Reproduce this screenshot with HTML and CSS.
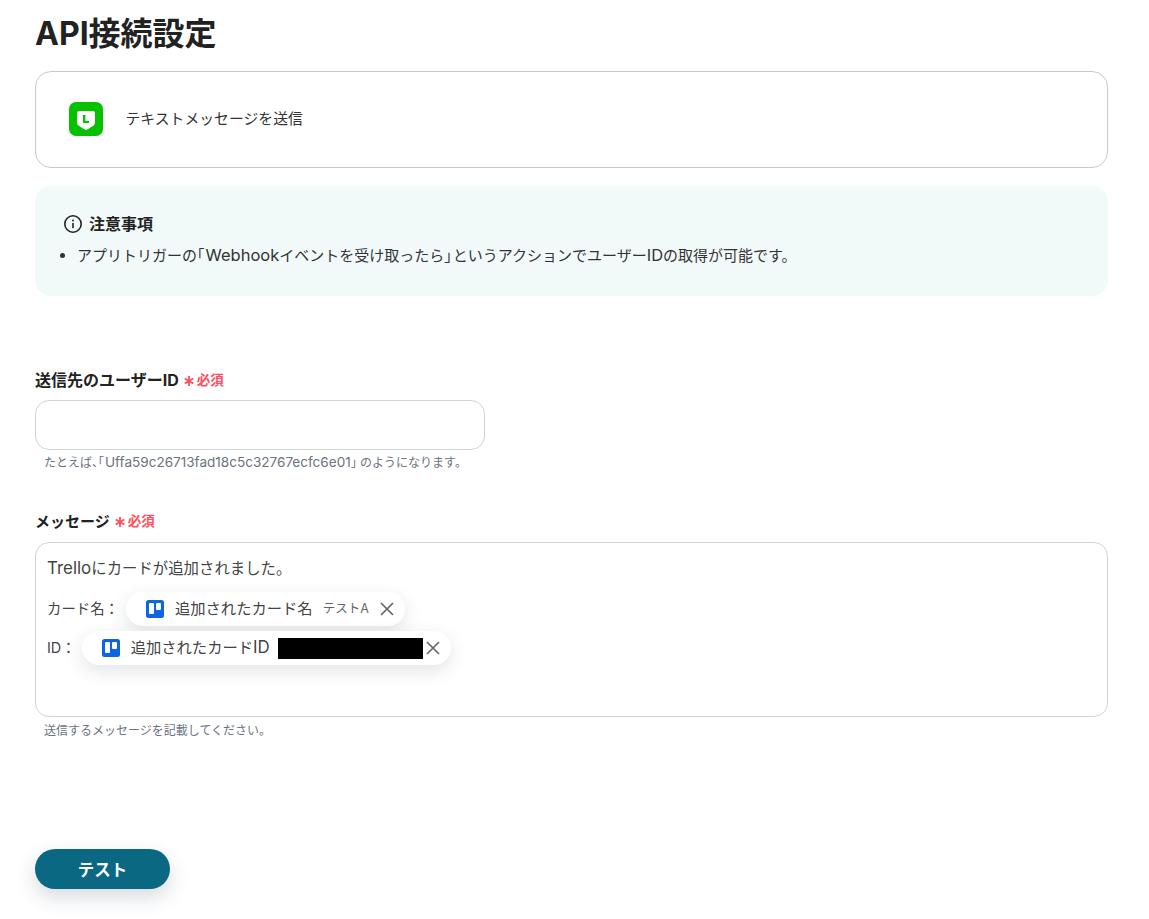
FILE: index.html
```html
<!DOCTYPE html>
<html lang="ja">
<head>
<meta charset="utf-8">
<title>API接続設定</title>
<link rel="stylesheet" href="styles.css">
</head>
<body>
<main class="page">
  <h1 class="title">API接続設定</h1>
  <section class="app-card">
    <svg class="app-icon" viewBox="0 0 34 34" width="34" height="34" aria-hidden="true">
      <rect width="34" height="34" rx="7" fill="#06c100"/>
      <path d="M8 11q0-2 2-2h14q2 0 2 2v9q0 3-3 4.500q-3 2-6 3.500q-3-1.500-6-3.500q-3-1.500-3-4.500z" fill="#fff"/>
      <path d="M14 13h2.400v6h3.600v2h-6z" fill="#06c100"/>
    </svg>
    <span class="app-text">テキストメッセージを送信</span>
  </section>
  <section class="notice">
    <div class="notice-head">
      <svg viewBox="0 0 20 20" width="20" height="20" aria-hidden="true">
        <circle cx="10" cy="10" r="8.200" fill="none" stroke="#222" stroke-width="1.600"/>
        <rect x="9.200" y="9" width="1.600" height="5.200" fill="#222"/>
        <circle cx="10" cy="6.600" r="1" fill="#222"/>
      </svg>
      <strong>注意事項</strong>
    </div>
    <ul class="notice-list">
      <li>アプリトリガーの<span class="bracket spaced">「</span><span class="latin">Webhook</span>イベントを受け取ったら<span class="bracket spaced">」</span>というアクションでユーザー<span class="latin">ID</span>の取得が可能です。</li>
    </ul>
  </section>
  <section class="field field-user">
    <div class="label"><span>送信先のユーザーID</span><span class="req"><svg class="aster" viewBox="0 0 12 12" width="12" height="12" aria-hidden="true"><path d="M6 1v10M1.700 3.500l8.600 5M10.300 3.500l-8.600 5" stroke="#ff4d5e" stroke-width="1.800" fill="none"/></svg>必須</span></div>
    <div class="input"></div>
    <p class="hint">たとえば<span class="bracket spaced">、「</span><span class="latin">Uffa59c26713fad18c5c32767ecfc6e01</span><span class="bracket">」</span> のようになります。</p>
  </section>
  <section class="field field-msg">
    <div class="label"><span>メッセージ</span><span class="req"><svg class="aster" viewBox="0 0 12 12" width="12" height="12" aria-hidden="true"><path d="M6 1v10M1.700 3.500l8.600 5M10.300 3.500l-8.600 5" stroke="#ff4d5e" stroke-width="1.800" fill="none"/></svg>必須</span></div>
    <div class="textarea">
      <div class="line line-first"><span class="latin">Trello</span>にカードが追加されました。</div>
      <div class="line chip-line chip-line-a"><span class="chip-label">カード名：</span>
        <span class="chip chip-a">
          <svg viewBox="0 0 18 18" width="18" height="18" aria-hidden="true"><rect width="18" height="18" rx="2.500" fill="#0c66e4"/><rect x="3" y="3" width="5" height="11" rx="1" fill="#fff"/><rect x="10" y="3" width="5" height="7" rx="1" fill="#fff"/></svg>
          <span class="chip-name">追加されたカード名</span>
          <span class="chip-value">テストA</span>
          <svg class="close" viewBox="0 0 14 14" width="14" height="14" aria-hidden="true"><path d="M1 1l12 12M13 1L1 13" stroke="#666" stroke-width="1.700" fill="none"/></svg>
        </span>
      </div>
      <div class="line chip-line chip-line-b"><span class="chip-label">ID：</span>
        <span class="chip chip-b">
          <svg viewBox="0 0 18 18" width="18" height="18" aria-hidden="true"><rect width="18" height="18" rx="2.500" fill="#0c66e4"/><rect x="3" y="3" width="5" height="11" rx="1" fill="#fff"/><rect x="10" y="3" width="5" height="7" rx="1" fill="#fff"/></svg>
          <span class="chip-name">追加されたカード<span class="latin">ID</span></span>
          <span class="redact"></span>
          <svg class="close" viewBox="0 0 14 14" width="14" height="14" aria-hidden="true"><path d="M1 1l12 12M13 1L1 13" stroke="#666" stroke-width="1.700" fill="none"/></svg>
        </span>
      </div>
    </div>
    <p class="hint hint-msg">送信するメッセージを記載してください。</p>
  </section>
  <button class="test-btn" type="button">テスト</button>
</main>
</body>
</html>
```
FILE: styles.css
```css
* { box-sizing: border-box; }
html, body { margin: 0; padding: 0; background: #fff; }
body {
  font-family: Inter, "Noto Sans CJK JP", sans-serif;
  color: #222;
  height: 919px;
  overflow: hidden;
}
.page { padding: 0 41px 0 35px; display: flex; flex-direction: column; align-items: flex-start; }
.title { margin: 13px 0 0; font-size: 32px; line-height: 42px; font-weight: 700; height: 42px; color: #222; }
.app-card {
  margin-top: 16px;
  width: 100%;
  height: 97px;
  border: 1px solid #c8c8c8;
  border-radius: 16px;
  display: flex;
  align-items: center;
  padding-left: 33px;
}
.app-icon { flex: none; margin-top: -1px; }
.app-text { margin: -4px 0 0 22.500px; font-size: 14.850px; color: #333; }
.notice {
  margin-top: 18px;
  width: 100%;
  height: 110px;
  border-radius: 16px;
  background: #f1faf9;
  padding: 28px 28px 0 28px;
}
.notice-head { display: flex; align-items: center; gap: 6px; height: 20px; font-size: 16px; }
.notice-head strong { font-weight: 700; margin-top: -2px; }
.notice-list { margin: 11px 0 0; padding: 0 0 0 14px; font-size: 15px; line-height: 22px; color: #333; }
.bracket { font-feature-settings: "halt"; }
.spaced { margin-right: 1px; }
.latin { font-size: 1.100em; line-height: 1; }
.hint .latin { font-size: 1.130em; }
.field { width: 100%; }
.field-user { margin-top: 73px; }
.field-msg { margin-top: 37px; }
.label { display: flex; align-items: center; gap: 4px; height: 22px; font-size: 16px; font-weight: 700; color: #222; }
.field-user .label { margin-top: -1px; }
.field-msg .label { font-size: 15px; }
.req { display: flex; align-items: center; color: #ff4d5e; font-size: 13.500px; gap: 2px; font-weight: 700; }
.aster { margin-top: 3px; }
.input { margin-top: 10px; width: 450px; height: 50px; border: 1px solid #cfd3da; border-radius: 14px; }
.hint { margin: 4px 0 0 9px; font-size: 12px; line-height: 18px; color: #6b7280; }
.hint-msg { margin-top: 5px; }
.textarea {
  margin-top: 11px;
  width: 100%;
  height: 175px;
  border: 1px solid #cfd3da;
  border-radius: 14px;
  padding: 13px 11px;
  font-size: 15px;
  color: #444;
}
.line { line-height: 26px; height: 26px; }
.line-first { font-size: 15.400px; }
.chip-line { display: flex; align-items: center; white-space: nowrap; }
.chip-label { font-size: 14.400px; }
.chip-line-a { margin-top: 14px; }
.chip-line-b { margin-top: 13px; }
.chip {
  display: inline-flex;
  align-items: center;
  height: 34px;
  border-radius: 17px;
  background: #fff;
  box-shadow: 0 6px 18px rgba(40, 50, 70, .13);
  padding-left: 20px;
}
.chip-a { margin-left: 7px; width: 279px; }
.chip-b { margin-left: 6px; width: 369px; }
.chip-name { margin-left: 11px; color: #444; font-size: 15.300px; }
.chip-value { margin-left: 10px; font-size: 12.500px; color: #666; }
.chip-a .close { margin-left: 11px; }
.redact { margin-left: 8.500px; width: 145px; height: 21px; background: #000; }
.chip-b .close { margin-left: 3px; }
.test-btn {
  margin-top: 109px;
  width: 135px;
  height: 40px;
  border: 0;
  border-radius: 20px;
  background: #0b6883;
  color: #fff;
  font: 700 16.500px Inter, "Noto Sans CJK JP", sans-serif;
  box-shadow: 0 8px 20px rgba(30, 50, 70, .18);
}
```
